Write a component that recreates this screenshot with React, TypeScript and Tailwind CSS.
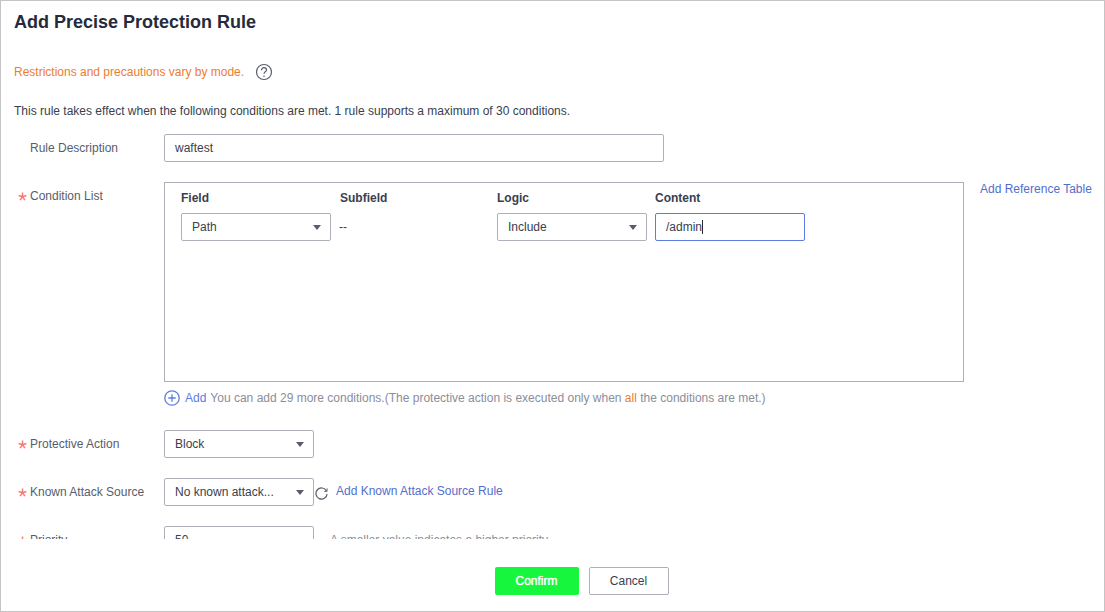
const labelCls = "w-[150px] shrink-0 flex items-center text-xs text-[#575d6c]";

const Star = () => (
  <svg width="9" height="9" viewBox="0 0 9 9" className="mt-[1px] shrink-0">
    <path d="M4.500.4v4.300M4.500 4.700L.6 3.500M4.500 4.700l3.900-1.200M4.500 4.700L2.100 8.200M4.500 4.700l2.400 3.500" stroke="#f77b78" strokeWidth="1.500" fill="none" />
  </svg>
);

const Select = ({ value, width }: { value: string; width: string }) => (
  <div className={`${width} h-7 shrink-0 flex items-center justify-between pl-[10px] pr-[9px] bg-white border border-[#adb0b8] rounded-[2px] text-xs text-[#3a404e]`}>
    <span>{value}</span>
    <span className="w-0 h-0 border-x-[4px] border-x-transparent border-t-[5px] border-t-[#575d6c]" />
  </div>
);

const Row = ({ label, required, children }: { label: string; required?: boolean; children: React.ReactNode }) => (
  <div className="flex items-center h-7">
    <div className={labelCls}>
      <span className="w-4 flex justify-center shrink-0">{required && <Star />}</span>
      <span>{label}</span>
    </div>
    {children}
  </div>
);

export default function App() {
  return (
    <div className="w-[1105px] h-[612px] bg-white border border-[#c4c4c4] flex flex-col overflow-hidden font-['Liberation_Sans',Arial,sans-serif]">
      <div className="h-[538px] shrink-0 overflow-hidden pl-[13px]">
        <h1 className="pt-[12px] text-lg leading-[19px] font-bold text-[#252b3a]">Add Precise Protection Rule</h1>

        <div className="mt-[30px] flex items-center h-[20px]">
          <span className="text-xs text-[#ee7c2f]">Restrictions and precautions vary by mode.</span>
          <svg width="18" height="18" viewBox="0 0 18 18" className="ml-[11px]" fill="none">
            <circle cx="9" cy="9" r="7.500" stroke="#575d6c" strokeWidth="1.200" />
            <path d="M6.500 7.200c0-1.500 1.100-2.500 2.500-2.500s2.500.9 2.500 2.300c0 1.900-2.500 1.800-2.500 3.800" stroke="#575d6c" strokeWidth="1.200" />
            <circle cx="9" cy="13.200" r=".8" fill="#575d6c" />
          </svg>
        </div>

        <p className="mt-[22px] text-xs leading-[14px] text-[#3a404e]">
          This rule takes effect when the following conditions are met. 1 rule supports a maximum of 30 conditions.
        </p>

        <div className="mt-[16px]">
          <Row label="Rule Description">
            <div className="w-[500px] h-7 flex items-center px-[10px] border border-[#adb0b8] rounded-[2px] text-xs text-[#3a404e]">waftest</div>
          </Row>
        </div>

        <div className="mt-[20px] flex items-start">
          <div className={`${labelCls} h-[28px]`}>
            <span className="w-4 flex justify-center shrink-0"><Star /></span>
            <span>Condition List</span>
          </div>
          <div className="w-[800px] h-[200px] shrink-0 border border-[#adb0b8] pl-4 pt-[8px]">
            <div className="grid grid-cols-[159px_157px_158px_158px] text-xs font-bold text-[#3a404e] leading-[14px]">
              <span>Field</span>
              <span>Subfield</span>
              <span>Logic</span>
              <span>Content</span>
            </div>
            <div className="mt-2 grid grid-cols-[158px_158px_158px_158px] items-center">
              <Select value="Path" width="w-[150px]" />
              <span className="text-xs text-[#3a404e]">--</span>
              <Select value="Include" width="w-[150px]" />
              <div className="w-[150px] h-7 flex items-center px-[10px] border border-[#5e7ce0] rounded-[2px] text-xs text-[#3a404e]">
                /admin<span className="w-px h-[14px] bg-[#252b3a]" />
              </div>
            </div>
          </div>
          <a className="ml-4 text-xs leading-[14px] text-[#526ecc]">Add Reference Table</a>
        </div>

        <div className="mt-2 ml-[150px] h-[16px] flex items-center text-xs">
          <svg width="16" height="16" viewBox="0 0 16 16" fill="none" className="mr-[5px]">
            <circle cx="8" cy="8" r="7.200" stroke="#5e7ce0" strokeWidth="1.300" />
            <path d="M8 4.300v7.400M4.300 8h7.400" stroke="#5e7ce0" strokeWidth="1.300" />
          </svg>
          <span className="text-[#5e7ce0]">Add</span>
          <span className="ml-[4px] text-[#8a8e99]">
            You can add 29 more conditions.(The protective action is executed only when <span className="text-[#ee7c2f]">all</span> the conditions are met.)
          </span>
        </div>

        <div className="mt-[24px] flex flex-col gap-5">
          <Row label="Protective Action" required>
            <Select value="Block" width="w-[150px]" />
          </Row>
          <Row label="Known Attack Source" required>
            <Select value="No known attack..." width="w-[150px]" />
            <svg width="13" height="13" viewBox="0 0 14 14" fill="none" className="ml-[1px] mt-[2px]" stroke="#575d6c" strokeWidth="1.300">
              <path d="M12.300 4.200A6 6 0 1 0 13 7.500" />
              <path d="M13 1.500v3.200H9.900" strokeWidth="1" />
            </svg>
            <a className="ml-[8px] mt-[-2px] text-xs text-[#526ecc]">Add Known Attack Source Rule</a>
          </Row>
          <Row label="Priority" required>
            <div className="w-[150px] h-7 flex items-center px-[10px] border border-[#adb0b8] rounded-[2px] text-xs text-[#3a404e]">50</div>
            <span className="ml-4 text-xs text-[#8a8e99]">A smaller value indicates a higher priority.</span>
          </Row>
        </div>
      </div>

      <div className="flex justify-center gap-[10px] pt-[28px] pl-[58px]">
        <button className="w-[84px] h-7 bg-[#16f63c] rounded-[2px] text-xs text-white [text-shadow:0_0_1px_#ffffff]">Confirm</button>
        <button className="w-[80px] h-7 bg-white border border-[#adb0b8] rounded-[2px] text-xs text-[#3a404e]">Cancel</button>
      </div>
    </div>
  );
}
